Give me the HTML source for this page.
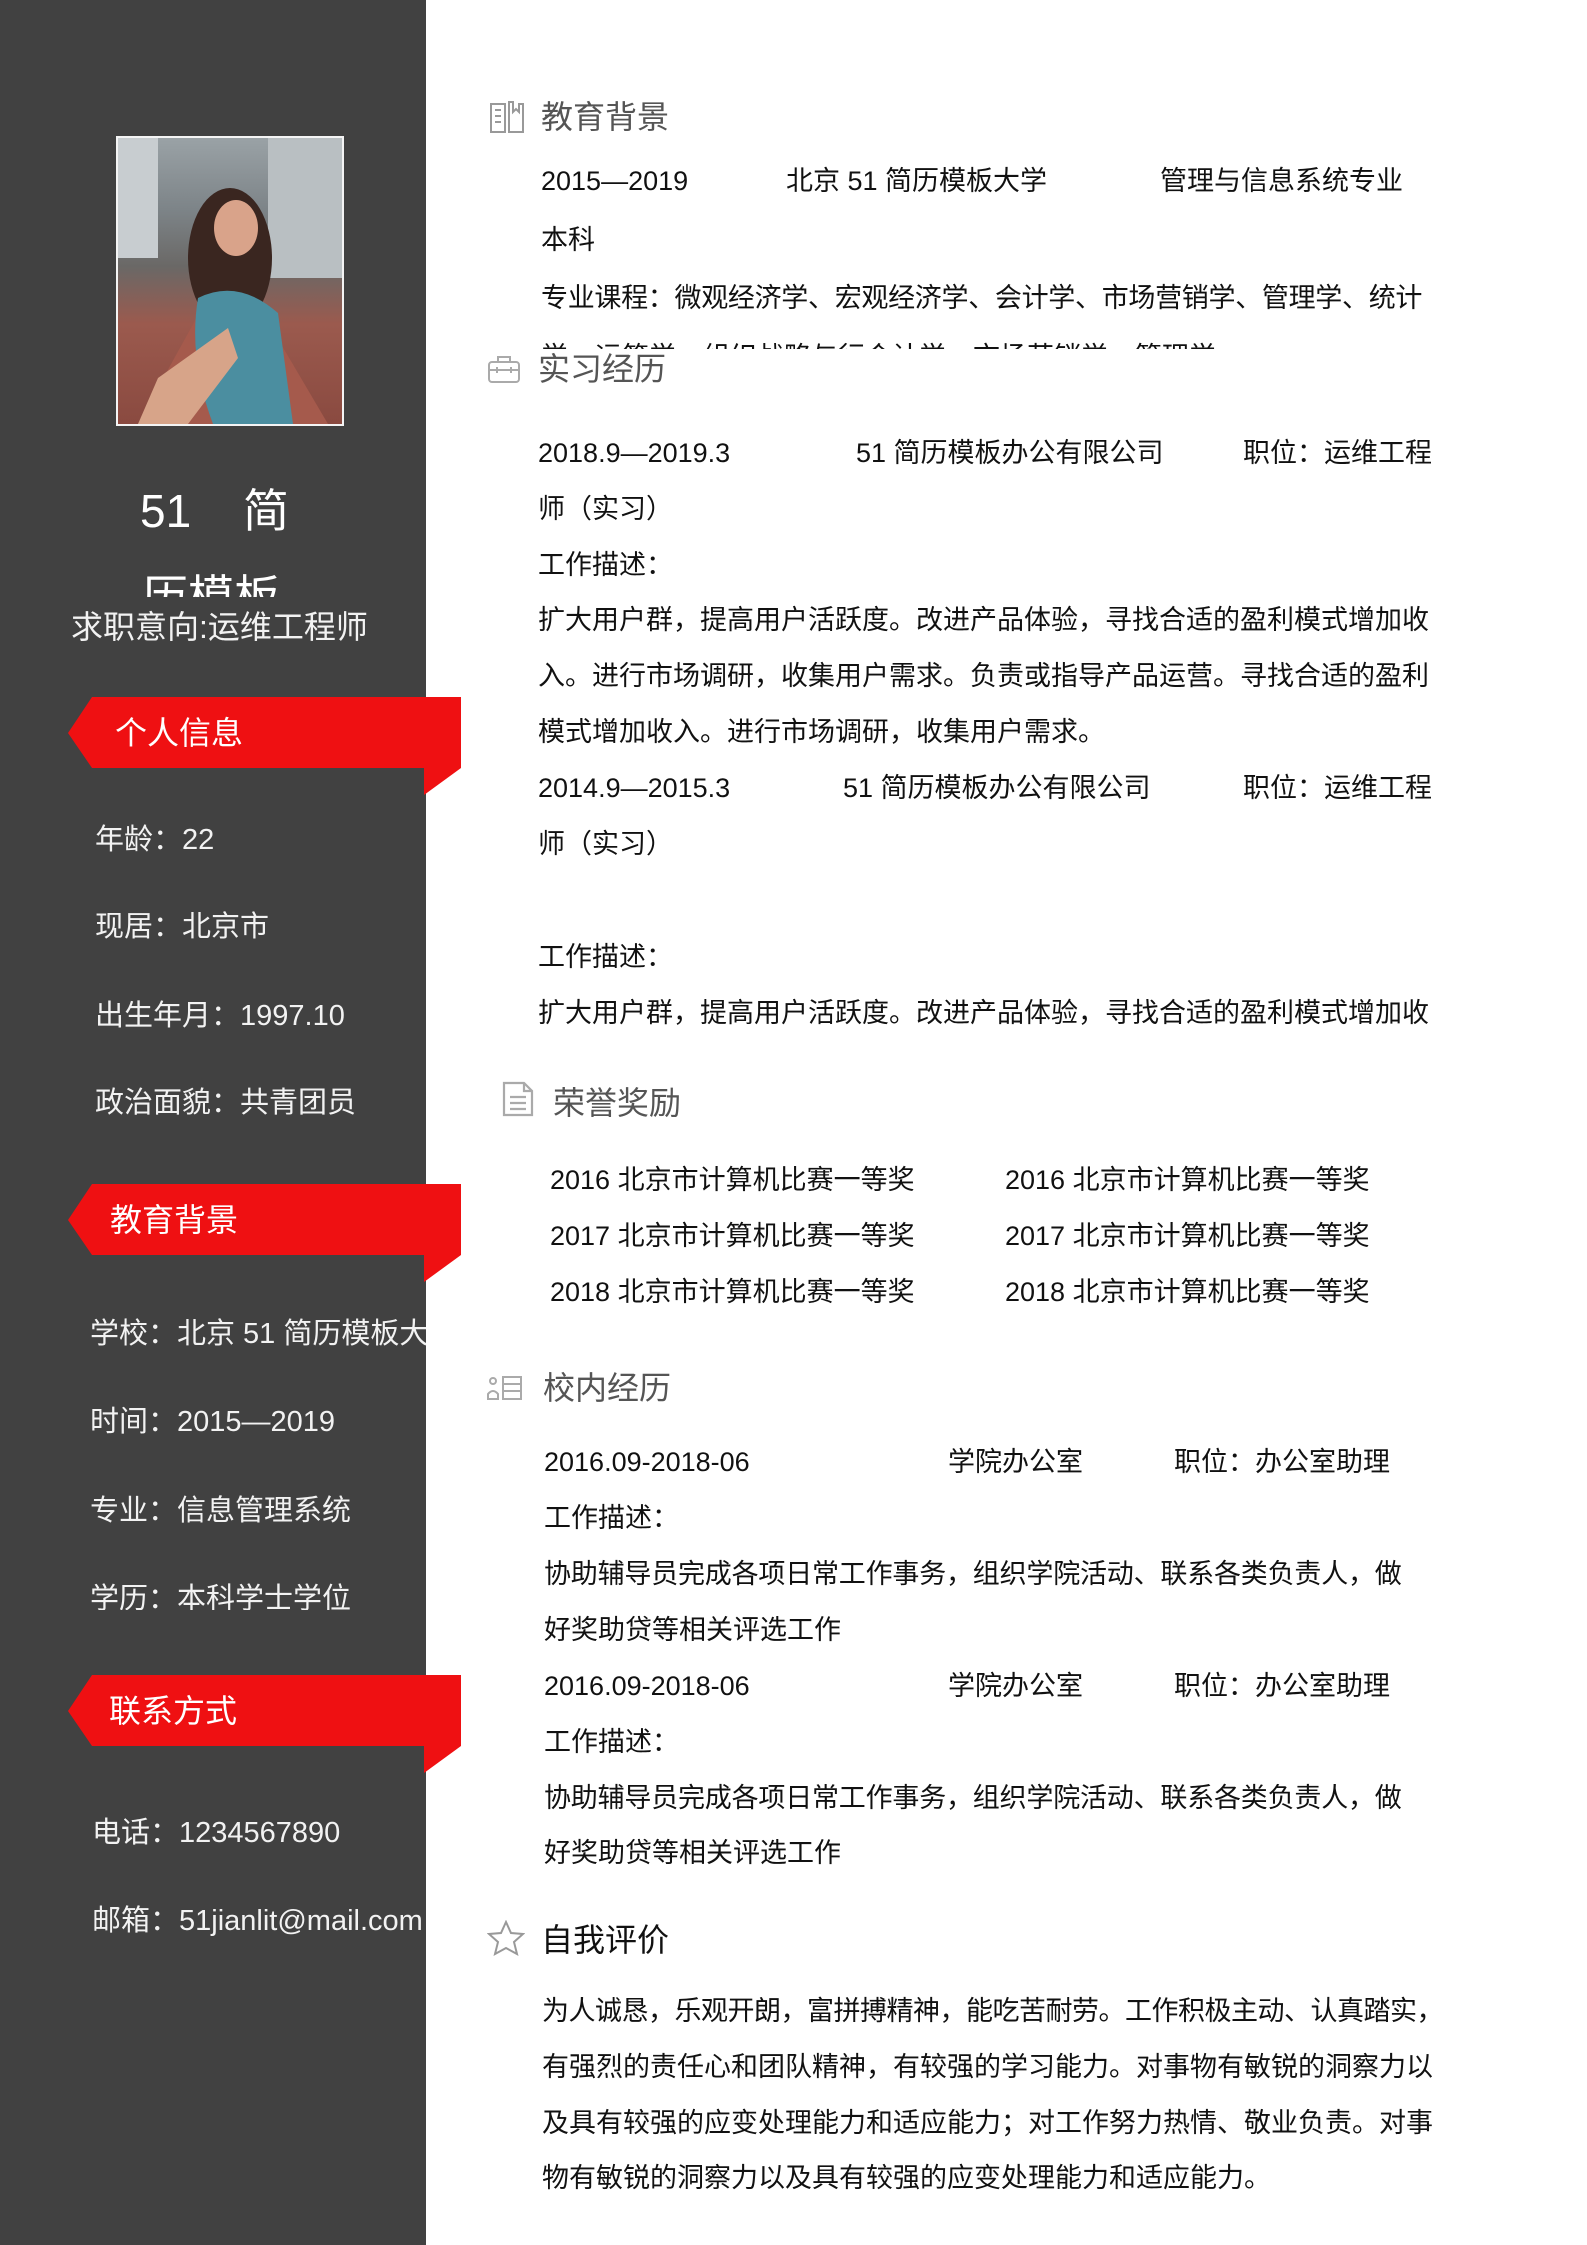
<!DOCTYPE html>
<html><head><meta charset="utf-8"><style>
*{margin:0;padding:0;box-sizing:border-box}
body{width:1587px;height:2245px;position:relative;background:#fff;overflow:hidden;font-family:"Liberation Sans","Noto Sans CJK SC",sans-serif;color:#111}
.t{position:absolute;white-space:nowrap;line-height:1;font-size:27px}
.sb{position:absolute;left:0;top:0;width:426px;height:2245px;background:#414141}
.w{color:#f2f2f2;font-size:29px}
.h{font-size:32px;color:#555}
.ban{position:absolute;left:0;width:470px}
.clip{position:absolute;overflow:hidden}
</style></head><body>
<div class="sb"></div>
<!-- photo -->
<div style="position:absolute;left:116px;top:136px;width:228px;height:290px;border:2px solid #f4f4f4;overflow:hidden;background:linear-gradient(#9aa2a6 0%,#7d8488 25%,#6a6866 45%,#9b5a4e 65%,#8a4a40 100%)">
<svg width="224" height="286" viewBox="0 0 224 286">
<rect x="0" y="0" width="40" height="120" fill="#c8cdd0"/>
<rect x="150" y="0" width="74" height="140" fill="#b9bfc2"/>
<path d="M20 286 L95 150 L130 150 L210 286Z" fill="#a55a4c"/>
<ellipse cx="112" cy="120" rx="42" ry="70" fill="#3a2620"/>
<ellipse cx="118" cy="90" rx="22" ry="28" fill="#d9a38a"/>
<path d="M80 160 Q120 140 160 175 L175 286 L95 286 Q70 220 80 160Z" fill="#4b8ea0"/>
<path d="M110 190 L40 240 L20 286 L70 286 L120 220Z" fill="#d7a489"/>
</svg></div>
<div class="t" style="left:140px;top:488px;font-size:46px;color:#fff">51</div>
<div class="t" style="left:243px;top:488px;font-size:46px;color:#fff">简</div>
<div class="clip" style="left:130px;top:570px;width:170px;height:27px"><div class="t" style="left:12px;top:4px;font-size:46px;color:#fff">历模板</div></div>
<div class="t" style="left:71px;top:611px;font-size:32px;color:#f2f2f2">求职意向:运维工程师</div>

<!-- banners -->
<svg class="ban" style="top:697px" height="100" viewBox="0 0 470 100"><polygon points="68,36 92,0 461,0 461,71 92,71" fill="#ef1012"/><polygon points="424,71 461,71 424,98" fill="#ef1012"/></svg>
<div class="t" style="left:115px;top:717px;font-size:32px;color:#fff">个人信息</div>
<div class="t w" style="left:95px;top:826px">年龄：22</div>
<div class="t w" style="left:95px;top:913px">现居：北京市</div>
<div class="t w" style="left:95px;top:1002px">出生年月：1997.10</div>
<div class="t w" style="left:95px;top:1089px">政治面貌：共青团员</div>

<svg class="ban" style="top:1184px" height="100" viewBox="0 0 470 100"><polygon points="68,36 92,0 461,0 461,71 92,71" fill="#ef1012"/><polygon points="424,71 461,71 424,98" fill="#ef1012"/></svg>
<div class="t" style="left:110px;top:1204px;font-size:32px;color:#fff">教育背景</div>
<div class="clip" style="left:0;top:1310px;width:426px;height:300px">
<div class="t w" style="left:90px;top:10px">学校：北京 51 简历模板大学</div>
<div class="t w" style="left:90px;top:98px">时间：2015—2019</div>
<div class="t w" style="left:90px;top:187px">专业：信息管理系统</div>
<div class="t w" style="left:90px;top:275px">学历：本科学士学位</div>
</div>

<svg class="ban" style="top:1675px" height="100" viewBox="0 0 470 100"><polygon points="68,36 92,0 461,0 461,71 92,71" fill="#ef1012"/><polygon points="424,71 461,71 424,98" fill="#ef1012"/></svg>
<div class="t" style="left:109px;top:1695px;font-size:32px;color:#fff">联系方式</div>
<div class="clip" style="left:0;top:1800px;width:426px;height:160px">
<div class="t w" style="left:92px;top:19px">电话：1234567890</div>
<div class="t w" style="left:92px;top:107px">邮箱：51jianlit@mail.com</div>
</div>

<!-- main -->
<svg style="position:absolute;left:489px;top:100px" width="36" height="34" viewBox="0 0 36 34" fill="none" stroke="#999" stroke-width="2"><path d="M2 4h14v28H2z M20 2v30h14V4h-4v8l-3-3-3 3V2z M6 10h6 M6 16h6 M6 22h6"/></svg>
<div class="t h" style="left:541px;top:101px">教育背景</div>
<div class="t" style="left:541px;top:168px">2015—2019</div>
<div class="t" style="left:786px;top:168px">北京 51 简历模板大学</div>
<div class="t" style="left:1160px;top:168px">管理与信息系统专业</div>
<div class="t" style="left:541px;top:227px">本科</div>
<div class="t" style="left:541px;top:285px;letter-spacing:-0.3px">专业课程：微观经济学、宏观经济学、会计学、市场营销学、管理学、统计</div>
<div class="clip" style="left:530px;top:330px;width:700px;height:19px"><div class="t" style="left:11px;top:14px">学、运筹学、组织战略与行会计学、市场营销学、管理学</div></div>
<svg style="position:absolute;left:488px;top:354px" width="32" height="30" viewBox="0 0 32 30" fill="none" stroke="#aaa" stroke-width="2"><rect x="1" y="8" width="30" height="20" rx="3"/><path d="M10 8V3h12v5 M1 16h30 M9 13v6 M23 13v6"/></svg>
<div class="t h" style="left:538px;top:353px">实习经历</div>
<div class="t" style="left:538px;top:440px">2018.9—2019.3</div>
<div class="t" style="left:856px;top:440px">51 简历模板办公有限公司</div>
<div class="t" style="left:1243px;top:440px">职位：运维工程</div>
<div class="t" style="left:538px;top:496px">师（实习）</div>
<div class="t" style="left:538px;top:552px">工作描述：</div>
<div class="t" style="left:538px;top:607px">扩大用户群，提高用户活跃度。改进产品体验，寻找合适的盈利模式增加收</div>
<div class="t" style="left:538px;top:663px">入。进行市场调研，收集用户需求。负责或指导产品运营。寻找合适的盈利</div>
<div class="t" style="left:538px;top:719px">模式增加收入。进行市场调研，收集用户需求。</div>
<div class="t" style="left:538px;top:775px">2014.9—2015.3</div>
<div class="t" style="left:843px;top:775px">51 简历模板办公有限公司</div>
<div class="t" style="left:1243px;top:775px">职位：运维工程</div>
<div class="t" style="left:538px;top:831px">师（实习）</div>
<div class="t" style="left:538px;top:944px">工作描述：</div>
<div class="t" style="left:538px;top:1000px">扩大用户群，提高用户活跃度。改进产品体验，寻找合适的盈利模式增加收</div>

<svg style="position:absolute;left:501px;top:1080px" width="34" height="38" viewBox="0 0 34 38" fill="none" stroke="#aaa" stroke-width="2.2"><path d="M3 3h20l8 8v24H3z M23 3v8h8 M9 17h16 M9 23h16 M9 29h16"/></svg>
<div class="t h" style="left:553px;top:1087px">荣誉奖励</div>
<div class="t" style="left:550px;top:1167px">2016 北京市计算机比赛一等奖</div>
<div class="t" style="left:1005px;top:1167px">2016 北京市计算机比赛一等奖</div>
<div class="t" style="left:550px;top:1223px">2017 北京市计算机比赛一等奖</div>
<div class="t" style="left:1005px;top:1223px">2017 北京市计算机比赛一等奖</div>
<div class="t" style="left:550px;top:1279px">2018 北京市计算机比赛一等奖</div>
<div class="t" style="left:1005px;top:1279px">2018 北京市计算机比赛一等奖</div>

<svg style="position:absolute;left:487px;top:1375px" width="38" height="26" viewBox="0 0 38 26" fill="none" stroke="#aaa" stroke-width="2"><circle cx="6" cy="6" r="3"/><path d="M1 24v-5q5-6 10 0v5z M16 2h18v22H16z M16 9h18 M16 16h18"/></svg>
<div class="t h" style="left:543px;top:1372px">校内经历</div>
<div class="t" style="left:544px;top:1449px">2016.09-2018-06</div>
<div class="t" style="left:948px;top:1449px">学院办公室</div>
<div class="t" style="left:1174px;top:1449px">职位：办公室助理</div>
<div class="t" style="left:544px;top:1505px">工作描述：</div>
<div class="t" style="left:544px;top:1561px;letter-spacing:-0.2px">协助辅导员完成各项日常工作事务，组织学院活动、联系各类负责人，做</div>
<div class="t" style="left:544px;top:1617px">好奖助贷等相关评选工作</div>
<div class="t" style="left:544px;top:1673px">2016.09-2018-06</div>
<div class="t" style="left:948px;top:1673px">学院办公室</div>
<div class="t" style="left:1174px;top:1673px">职位：办公室助理</div>
<div class="t" style="left:544px;top:1729px">工作描述：</div>
<div class="t" style="left:544px;top:1785px;letter-spacing:-0.2px">协助辅导员完成各项日常工作事务，组织学院活动、联系各类负责人，做</div>
<div class="t" style="left:544px;top:1840px">好奖助贷等相关评选工作</div>

<svg style="position:absolute;left:487px;top:1920px" width="38" height="36" viewBox="0 0 38 36" fill="none" stroke="#999" stroke-width="2"><path d="M19 2l5 11 12 1-9 8 3 12-11-6-11 6 3-12-9-8 12-1z"/></svg>
<div class="t" style="left:541px;top:1924px;font-size:32px;color:#111">自我评价</div>
<div class="t" style="left:542px;top:1998px;letter-spacing:-0.5px">为人诚恳，乐观开朗，富拼搏精神，能吃苦耐劳。工作积极主动、认真踏实，</div>
<div class="t" style="left:542px;top:2054px">有强烈的责任心和团队精神，有较强的学习能力。对事物有敏锐的洞察力以</div>
<div class="t" style="left:542px;top:2110px">及具有较强的应变处理能力和适应能力；对工作努力热情、敬业负责。对事</div>
<div class="t" style="left:542px;top:2165px">物有敏锐的洞察力以及具有较强的应变处理能力和适应能力。</div>
</body></html>
